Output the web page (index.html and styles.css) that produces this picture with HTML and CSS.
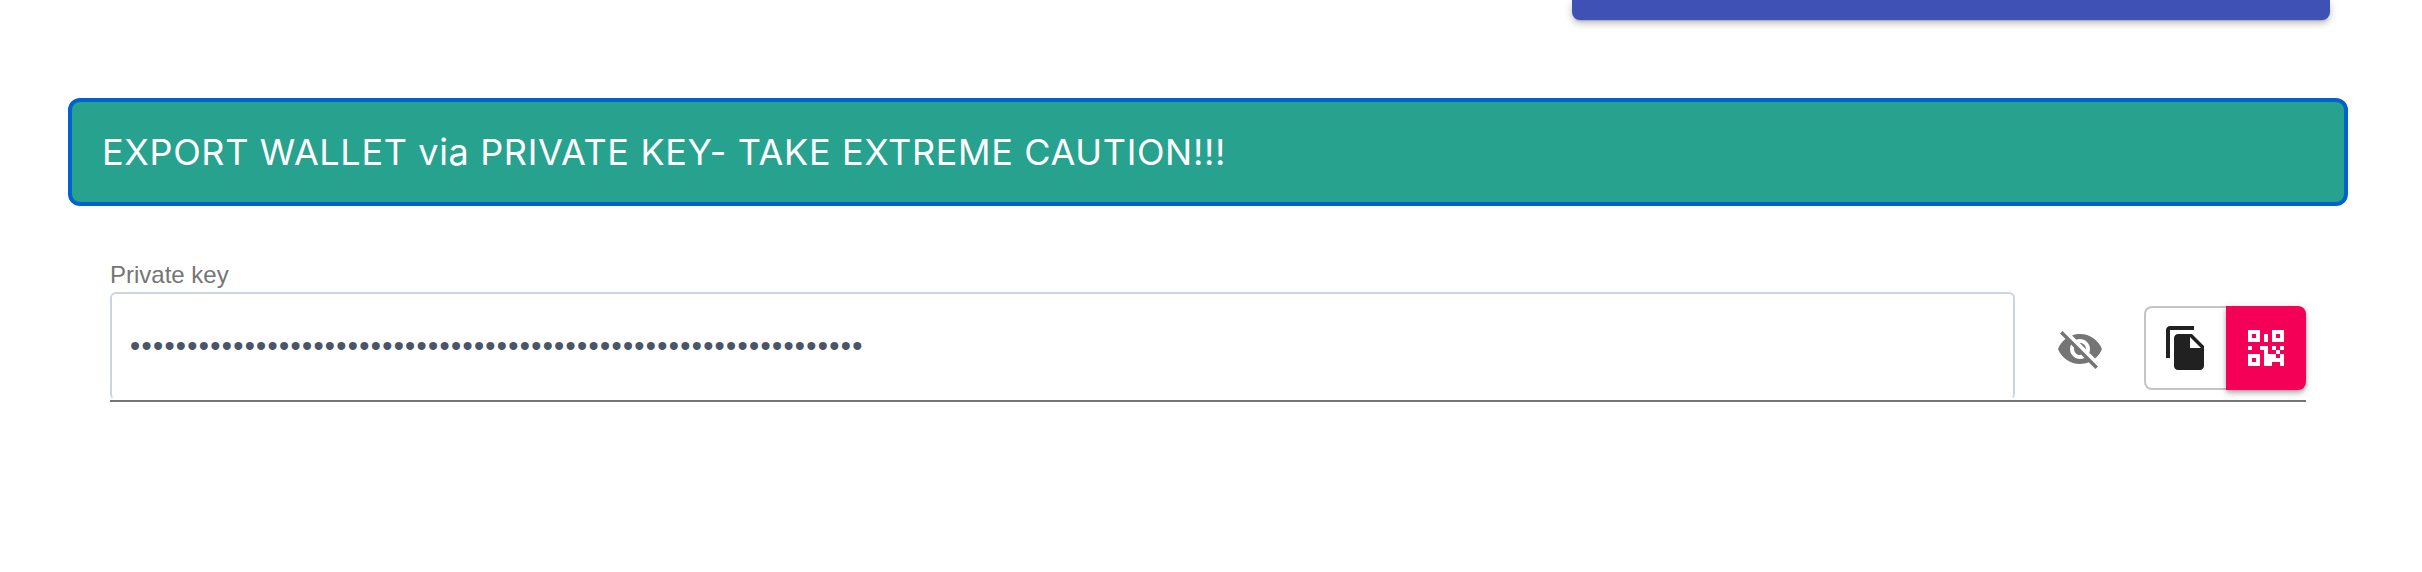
FILE: index.html
```html
<!DOCTYPE html>
<html lang="en">
<head>
    <meta charset="UTF-8">
    <title>Export wallet</title>
    <link rel="stylesheet" href="styles.css">
</head>
<body>
    <div class="top-row">
        <div class="top-button"></div>
    </div>

    <div class="banner">EXPORT WALLET via PRIVATE KEY- TAKE EXTREME CAUTION!!!</div>

    <div class="field">
        <label class="field-label" for="privateKey">Private key</label>
        <div class="field-row">
            <input class="key-input" id="privateKey" type="password" readonly value="0000000000000000000000000000000000000000000000000000000000000000">
            <button class="eye-button" aria-label="Show key">
                <svg viewBox="0 0 24 24" width="48" height="48"><path d="M12 7c2.76 0 5 2.24 5 5 0 .65-.13 1.26-.36 1.83l2.92 2.92c1.51-1.26 2.7-2.89 3.43-4.75-1.73-4.39-6-7.5-11-7.5-1.4 0-2.74.25-3.98.7l2.16 2.16C10.74 7.13 11.35 7 12 7zM2 4.27l2.28 2.28.46.46C3.08 8.3 1.78 10.02 1 12c1.73 4.39 6 7.5 11 7.5 1.55 0 3.03-.3 4.38-.84l.42.42L19.73 22 21 20.73 3.27 3 2 4.27zM7.53 9.8l1.55 1.55c-.05.21-.08.43-.08.65 0 1.66 1.34 3 3 3 .22 0 .44-.03.65-.08l1.55 1.55c-.67.33-1.41.53-2.2.53-2.76 0-5-2.24-5-5 0-.79.2-1.53.53-2.2zm4.31-.78l3.15 3.15.02-.16c0-1.66-1.34-3-3-3l-.17.01z"/></svg>
            </button>
            <div class="button-group">
                <button class="copy-button" aria-label="Copy">
                    <svg viewBox="0 0 24 24" width="48" height="48"><path d="M16 1H4c-1.1 0-2 .9-2 2v14h2V3h12V1zm-1 4l6 6v10c0 1.1-.9 2-2 2H7.99C6.89 23 6 22.1 6 21l.01-14c0-1.1.89-2 1.99-2h7zm-1 7h5.5L14 6.500V12z"/></svg>
                </button>
                <button class="qr-button" aria-label="QR code">
                    <svg viewBox="0 0 9 9" width="36" height="36" shape-rendering="crispEdges"><path fill-rule="evenodd" d="M0 0h3v3H0zM1 1v1h1V1zM6 0h3v3H6zM7 1v1h1V1zM0 6h3v3H0zM1 7v1h1V7zM4 1h1v2H4zM0 4h1v1H0zM3 4h2v1H3zM6 4h1v1H6zM8 4h1v1H8zM4 5h1v1H4zM7 5h1v1H7zM4 6h2v3H4zM6 6h1v1H6zM8 6h1v1H8zM7 7h2v1H7zM6 7h1v1H6zM8 8h1v1H8z"/></svg>
                </button>
            </div>
        </div>
    </div>
</body>
</html>
```

FILE: styles.css
```css
* {
    box-sizing: border-box;
}
body {
    margin: 0;
    background: #fff;
    font-family: 'Liberation Sans', Arial, sans-serif;
}
.top-row {
    display: flex;
    justify-content: flex-end;
    height: 20px;
    padding-right: 92px;
}
.top-button {
    width: 758px;
    background: #3f51b5;
    border-radius: 0 0 8px 8px;
    box-shadow: 0 3px 2px -2px rgba(0,0,0,0.2), 0 4px 6px rgba(0,0,0,0.14), 0 2px 10px rgba(0,0,0,0.12);
}
.banner {
    height: 108px;
    margin: 78px 74px 0 68px;
    padding: 0 30px;
    display: flex;
    align-items: center;
    background: #26a28f;
    border: 4px solid #0062cc;
    border-radius: 12px;
    color: #fff;
    font-family: Inter, sans-serif;
    font-size: 36px;
    letter-spacing: 0.65px;
}
.field {
    margin: 55px 116px 0 110px;
}
.field-label {
    display: block;
    margin: 0 0 3px 0;
    color: #757575;
    font-size: 24px;
    line-height: 28px;
}
.field-row {
    display: flex;
    align-items: flex-start;
    height: 110px;
    border-bottom: 2px solid #757575;
}
.key-input {
    flex: 1;
    height: 108px;
    padding: 0 20px 0 18px;
    background: #fff;
    border: 2px solid #cbd5e0;
    border-bottom-color: transparent;
    border-radius: 6px;
    color: #4a5568;
    font-family: 'Liberation Sans', sans-serif;
    font-size: 29px;
    letter-spacing: 1.31px;
    outline: none;
}
.eye-button {
    display: flex;
    width: 48px;
    height: 48px;
    margin: 33px 40px 0 41px;
    padding: 0;
    background: none;
    border: none;
    fill: #757575;
}
.button-group {
    display: flex;
    height: 84px;
    margin-top: 14px;
}
.copy-button {
    display: flex;
    align-items: center;
    justify-content: center;
    width: 82px;
    padding: 0;
    background: #fff;
    border: 2px solid #c4c4c4;
    border-right: none;
    border-radius: 8px 0 0 8px;
    fill: #212121;
}
.qr-button {
    display: flex;
    align-items: center;
    justify-content: center;
    width: 80px;
    padding: 0;
    background: #f50057;
    border: none;
    border-radius: 0 8px 8px 0;
    box-shadow: 0 2px 4px -1px rgba(0,0,0,0.2), 0 4px 5px rgba(0,0,0,0.14), 0 1px 10px rgba(0,0,0,0.12);
    fill: #fff;
}
```
